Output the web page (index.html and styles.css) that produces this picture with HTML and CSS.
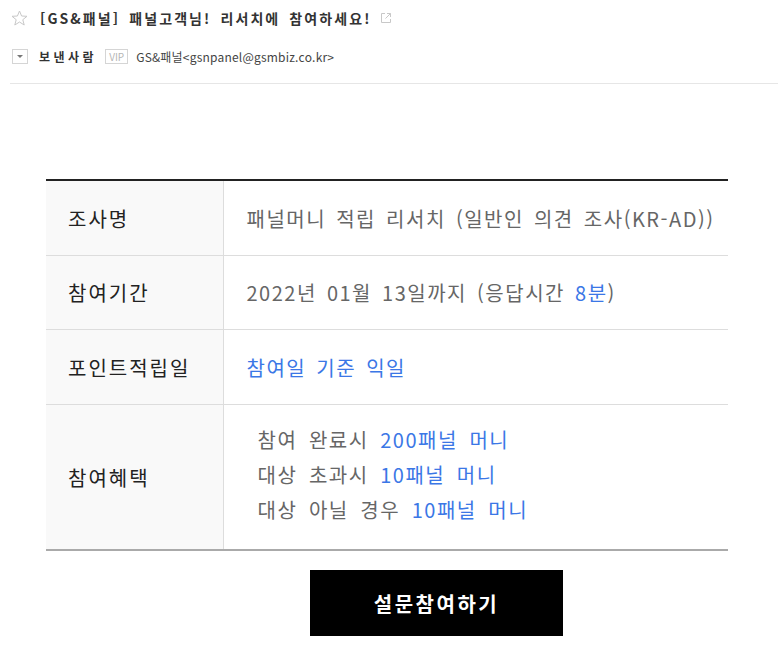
FILE: index.html
```html
<!DOCTYPE html>
<html lang="ko">
<head>
    <meta charset="UTF-8">
    <meta name="viewport" content="width=device-width, initial-scale=1.0">
    <title>[GS&amp;패널] 패널고객님! 리서치에 참여하세요!</title>
    <link rel="stylesheet" href="styles.css">
</head>
<body>
    <div class="mail-head">
        <div class="subject-row">
            <svg class="star" width="17" height="16" viewBox="0 0 17 16">
                <path d="M8.5 1 L10.6 6 L16 6.3 L11.8 9.7 L13.2 15 L8.5 12 L3.8 15 L5.2 9.7 L1 6.3 L6.4 6 Z" fill="none" stroke="#c8c8c8" stroke-width="1"/>
            </svg>
            <span class="subject">[GS&amp;패널] 패널고객님! 리서치에 참여하세요!</span>
            <svg class="popout" width="12" height="12" viewBox="0 0 12 12">
                <path d="M5 1.5 H1.5 V10.5 H10.5 V7" fill="none" stroke="#c8c8c8" stroke-width="1"/>
                <path d="M7 1.5 H10.5 V5 M10.5 1.5 L5.5 6.5" fill="none" stroke="#c8c8c8" stroke-width="1"/>
            </svg>
        </div>
        <div class="sender-row">
            <span class="toggle"><span class="caret"></span></span>
            <span class="sender-label">보낸사람</span>
            <span class="vip">VIP</span>
            <span class="sender">GS&amp;패널&lt;gsnpanel@gsmbiz.co.kr&gt;</span>
        </div>
    </div>

    <div class="mail-body">
        <table class="survey">
            <tr class="tall">
                <th>조사명</th>
                <td>패널머니 적립 리서치 (일반인 의견 조사(KR-AD))</td>
            </tr>
            <tr>
                <th>참여기간</th>
                <td>2022년 01월 13일까지 (응답시간 <span class="blue">8분</span>)</td>
            </tr>
            <tr class="tall">
                <th>포인트적립일</th>
                <td><span class="blue">참여일 기준 익일</span></td>
            </tr>
            <tr class="benefit">
                <th>참여혜택</th>
                <td>
                    <p>참여 완료시 <span class="blue">200패널 머니</span></p>
                    <p>대상 초과시 <span class="blue">10패널 머니</span></p>
                    <p>대상 아닐 경우 <span class="blue">10패널 머니</span></p>
                </td>
            </tr>
        </table>
        <a href="#" class="join-btn">설문참여하기</a>
    </div>
</body>
</html>
```

FILE: styles.css
```css
body {
    margin: 0;
    font-family: "Noto Sans CJK KR", "Noto Sans", sans-serif;
    color: #333;
    background: #fff;
}

.mail-head {
    margin-left: 10px;
    border-bottom: 1px solid #e6e6e6;
    height: 83px;
}

.subject-row {
    display: flex;
    align-items: center;
    height: 36px;
    padding-left: 1px;
}

.star {
    margin-right: 12px;
}

.subject {
    font-size: 14px;
    font-weight: bold;
    color: #333;
    letter-spacing: 2.1px;
    word-spacing: 3px;
}

.popout {
    margin-left: 8px;
}

.sender-row {
    display: flex;
    align-items: center;
    height: 40px;
    padding-left: 2px;
    font-size: 12px;
}

.toggle {
    width: 14px;
    height: 13px;
    border: 1px solid #d5d5d5;
    display: flex;
    align-items: center;
    justify-content: center;
    margin-right: 11px;
}

.caret {
    width: 0;
    height: 0;
    border-left: 3px solid transparent;
    border-right: 3px solid transparent;
    border-top: 3px solid #777;
}

.sender-label {
    font-weight: bold;
    color: #333;
    letter-spacing: 3.5px;
    margin-right: 8px;
}

.vip {
    font-size: 10px;
    color: #b5b5b5;
    border: 1px solid #d5d5d5;
    padding: 0 3px;
    line-height: 13px;
    margin-right: 8px;
}

.sender {
    color: #444;
    letter-spacing: 0.2px;
}

.mail-body {
    padding: 95px 0 0 46px;
}

.survey {
    width: 682px;
    border-collapse: collapse;
    border-top: 2px solid #222;
    border-bottom: 2px solid #aaa;
    font-size: 20px;
    letter-spacing: 1.5px;
    word-spacing: 3px;
}

.survey th {
    width: 177px;
    box-sizing: border-box;
    background-color: #f9f9f9;
    border-right: 1px solid #ddd;
    text-align: left;
    font-weight: normal;
    color: #222;
    letter-spacing: 2px;
    padding: 0 0 0 22px;
    height: 73px;
}

.survey td {
    color: #666;
    padding: 0 0 0 23px;
    height: 73px;
}

.survey .tall th,
.survey .tall td {
    height: 74px;
}

.survey tr + tr th,
.survey tr + tr td {
    border-top: 1px solid #ddd;
}

.survey .benefit th {
    height: 144px;
}

.survey .benefit td {
    height: 139px;
    padding: 0 0 5px 34px;
    word-spacing: 4.5px;
}

.survey p {
    margin: 0;
    line-height: 35px;
}

.blue {
    color: #3b77e6;
}

.join-btn {
    display: flex;
    align-items: center;
    justify-content: center;
    width: 253px;
    height: 66px;
    margin: 19px 0 0 264px;
    background-color: #000;
    color: #fff;
    font-size: 20px;
    font-weight: bold;
    letter-spacing: 2.5px;
    text-decoration: none;
}
```
